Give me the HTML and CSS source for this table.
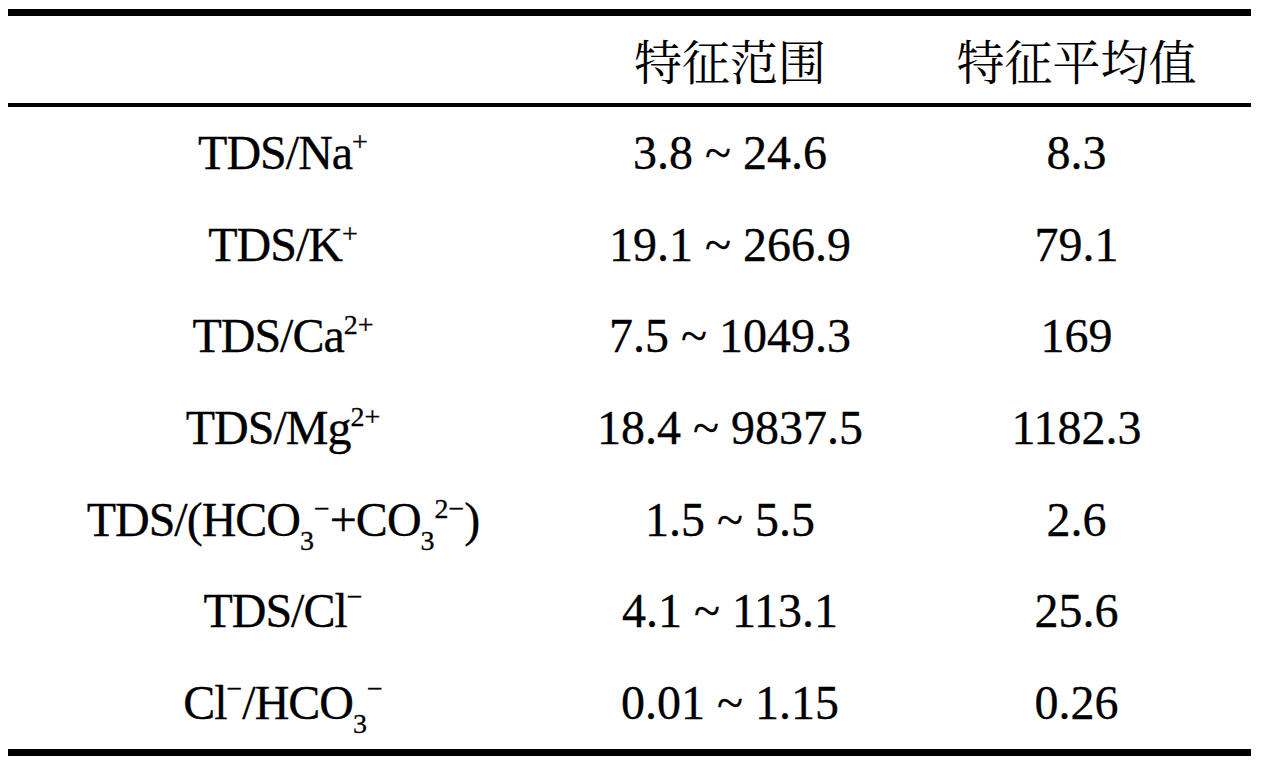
FILE: index.html
```html
<!DOCTYPE html>
<html lang="en">
<head>
    <meta charset="UTF-8">
    <title>TDS 特征比值</title>
    <link rel="stylesheet" href="styles.css">
</head>
<body>
    <div class="table">
        <div class="row head">
            <div class="cell"></div>
            <div class="cell cjk" lang="zh-CN">特征范围</div>
            <div class="cell cjk" lang="zh-CN">特征平均值</div>
        </div>
        <div class="row">
            <div class="cell name">TDS/Na<sup>+</sup></div>
            <div class="cell">3.8 ~ 24.6</div>
            <div class="cell">8.3</div>
        </div>
        <div class="row">
            <div class="cell name">TDS/K<sup>+</sup></div>
            <div class="cell">19.1 ~ 266.9</div>
            <div class="cell">79.1</div>
        </div>
        <div class="row">
            <div class="cell name">TDS/Ca<sup>2+</sup></div>
            <div class="cell">7.5 ~ 1049.3</div>
            <div class="cell">169</div>
        </div>
        <div class="row">
            <div class="cell name">TDS/Mg<sup>2+</sup></div>
            <div class="cell">18.4 ~ 9837.5</div>
            <div class="cell">1182.3</div>
        </div>
        <div class="row">
            <div class="cell name">TDS/(HCO<sub>3</sub><sup>−</sup>+CO<sub>3</sub><sup>2−</sup>)</div>
            <div class="cell">1.5 ~ 5.5</div>
            <div class="cell">2.6</div>
        </div>
        <div class="row">
            <div class="cell name">TDS/Cl<sup class="minus">−</sup></div>
            <div class="cell">4.1 ~ 113.1</div>
            <div class="cell">25.6</div>
        </div>
        <div class="row">
            <div class="cell name">Cl<sup class="minus">−</sup>/HCO<sub>3</sub><sup class="minus">−</sup></div>
            <div class="cell">0.01 ~ 1.15</div>
            <div class="cell">0.26</div>
        </div>
    </div>
</body>
</html>
```

FILE: styles.css
```css
body {
    margin: 0;
    padding: 9px 0 0 8px;
    background: #fff;
    color: #000;
    font-family: "Liberation Serif", "DejaVu Serif", serif;
    font-size: 48px;
}
.table {
    width: 1243px;
    border-top: 7px solid #000;
    border-bottom: 7px solid #000;
}
.row {
    display: grid;
    grid-template-columns: 550px 344px 349px;
    height: 91.7px;
    align-items: center;
    justify-items: center;
}
.head {
    height: 87px;
    border-bottom: 4px solid #000;
}
.cell {
    line-height: 1;
    white-space: nowrap;
    -webkit-text-stroke: 0.3px #000;
}
.name {
    letter-spacing: -1px;
}
.cjk {
    font-family: "Noto Serif CJK SC", "Noto Sans CJK SC", serif;
    font-size: 48px;
    -webkit-text-stroke: 0;
}
sup, sub {
    font-size: 28px;
    line-height: 0;
    letter-spacing: 0;
}
sup {
    vertical-align: 18px;
}
sup.minus {
    vertical-align: 21px;
}
sub {
    vertical-align: -14px;
}
```
